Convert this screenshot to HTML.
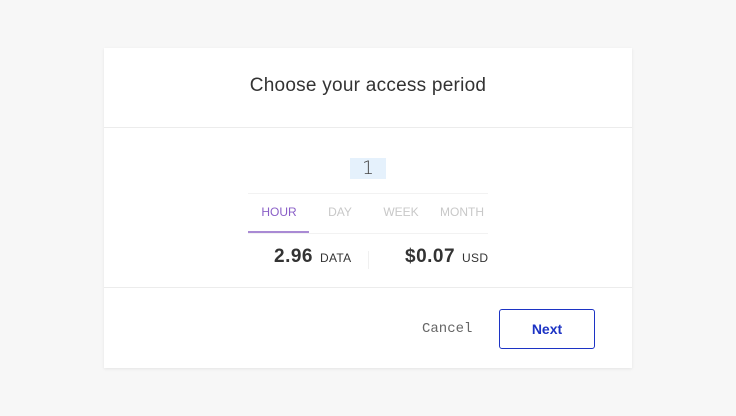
<!DOCTYPE html>
<html><head><style>
body{margin:0;width:736px;height:416px;background:#f7f7f7;font-family:"Liberation Sans",sans-serif;position:relative;overflow:hidden}
.card{position:absolute;left:104px;top:48px;width:528px;height:320px;background:#fff;box-shadow:0 1px 3px rgba(0,0,0,.08)}
.title{position:absolute;left:0;right:0;top:27px;text-align:center;font-size:19px;letter-spacing:0.25px;color:#333}
.hr{position:absolute;left:0;right:0;height:1px;background:#ececec}
.num{position:absolute;left:246px;top:110px;width:36px;height:21px;background:#e5f1fc;text-align:center;font-size:19px;line-height:21px;color:#444;font-family:"DejaVu Sans",sans-serif;font-weight:200}
.tabs{position:absolute;left:144px;top:145px;width:240px;height:39px;border-top:1px solid #f2f2f2;border-bottom:1px solid #f2f2f2}
.tab{position:absolute;top:11px;font-size:12px;color:#c8c8c8;width:60px;text-align:center}
.under{position:absolute;left:0;top:37px;width:61px;height:2px;background:#a98ad4}
.val{position:absolute;top:198px;font-size:19px;font-weight:bold;color:#333;letter-spacing:0.5px}
.unit{font-size:12px;font-weight:normal;margin-left:7px;letter-spacing:0.3px}
.btn{position:absolute;left:395px;top:261px;width:94px;height:38px;border:1px solid #1c33c4;border-radius:3px;text-align:center;line-height:38px;color:#1c33c4;font-weight:bold;font-size:14px}
.cancel{position:absolute;left:318px;top:273px;font-family:"Liberation Mono",monospace;font-size:14px;color:#666}
</style></head><body>
<div class="card">
<div class="title">Choose your access period</div>
<div class="hr" style="top:79px"></div>
<div class="num">1</div>
<div class="tabs">
<div class="tab" style="left:1px;color:#8a5fc7">HOUR</div>
<div class="tab" style="left:62px">DAY</div>
<div class="tab" style="left:123px">WEEK</div>
<div class="tab" style="left:184px">MONTH</div>
<div class="under"></div>
</div>
<div class="val" style="left:170px">2.96<span class="unit">DATA</span></div>
<div style="position:absolute;left:264px;top:203px;width:1px;height:18px;background:#f0f0f0"></div>
<div class="val" style="left:301px">$0.07<span class="unit">USD</span></div>
<div class="hr" style="top:239px"></div>
<div class="cancel">Cancel</div>
<div class="btn">Next</div>
</div>
</body></html>
